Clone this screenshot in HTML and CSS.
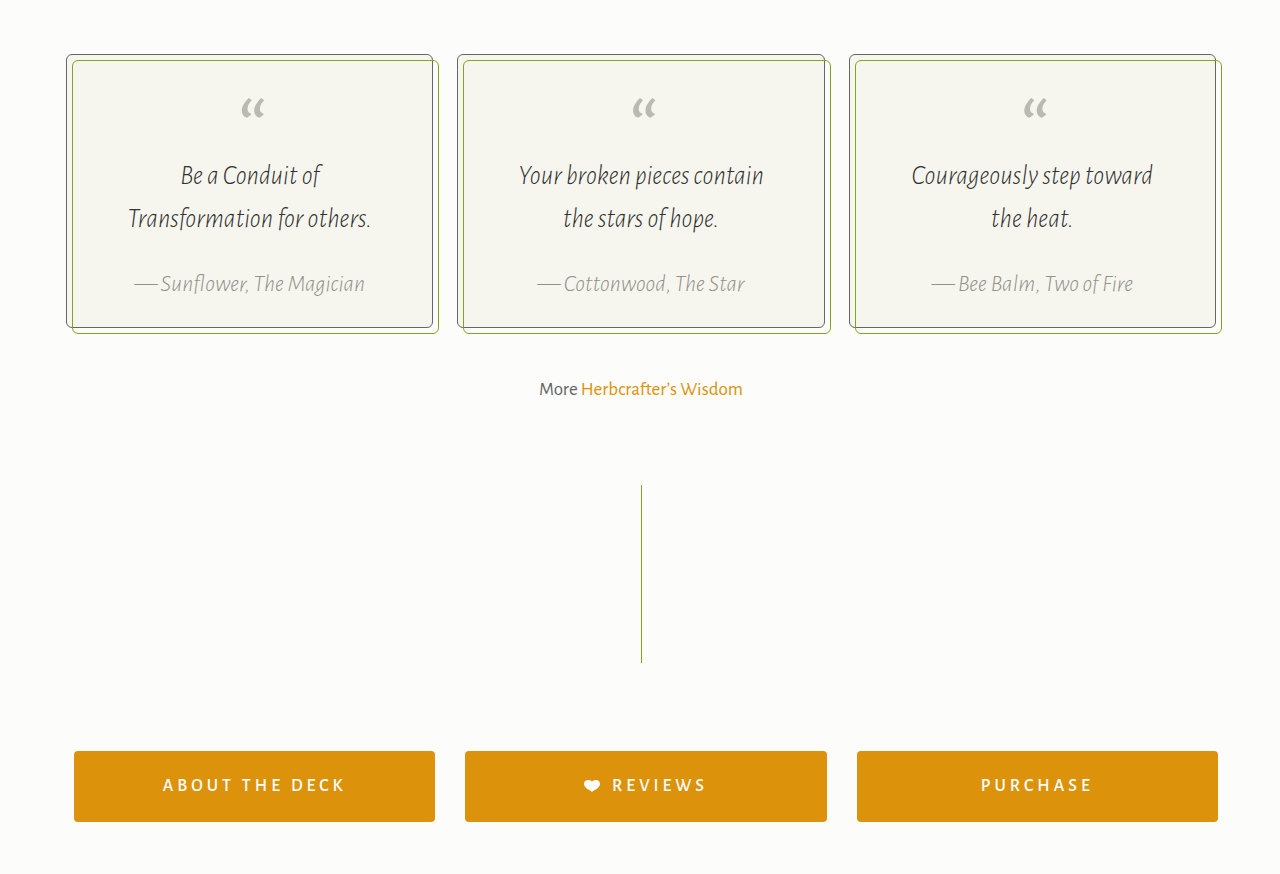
FILE: index.html
```
<!doctype html>
<html lang="en">
  <head>
    <title>Herbcrafter's Wisdom</title>
    <meta charset="utf-8" />
    <meta name="viewport" content="width=device-width, initial-scale=1" />
    <link rel="stylesheet" href="styles.css">
  </head>
  <body>
    <main class="page">
      <section class="quotes">
        <blockquote class="card">
          <span class="mark">“</span>
          <p class="quote">Be a Conduit of<br>Transformation for others.</p>
          <cite class="source">— Sunflower, The Magician</cite>
        </blockquote>
        <blockquote class="card">
          <span class="mark">“</span>
          <p class="quote">Your broken pieces contain<br>the stars of hope.</p>
          <cite class="source">— Cottonwood, The Star</cite>
        </blockquote>
        <blockquote class="card">
          <span class="mark">“</span>
          <p class="quote">Courageously step toward<br>the heat.</p>
          <cite class="source">— Bee Balm, Two of Fire</cite>
        </blockquote>
      </section>

      <p class="more">More <a href="#">Herbcrafter’s Wisdom</a></p>

      <hr class="divider">

      <nav class="buttons">
        <a class="button" href="#">About the Deck</a>
        <a class="button" href="#">
          <svg class="heart" viewBox="0 0 16 12" aria-hidden="true">
            <path d="M8 12C6.500 10 0 8.500 0 4C0 1.500 1.800 0 4.200 0C6 0 7.400 .7 8 1.800C8.600 .7 10 0 11.800 0C14.200 0 16 1.500 16 4C16 8.500 9.500 10 8 12Z" fill="currentColor"/>
          </svg>
          Reviews
        </a>
        <a class="button" href="#">Purchase</a>
      </nav>
    </main>
  </body>
</html>
```

FILE: styles.css
```
* {
  box-sizing: border-box;
}

body {
  margin: 0;
  background-color: #fcfcfa;
  color: #666666;
  font-family: "Alegreya Sans", Lato, sans-serif;
  font-size: 19px;
}

.page {
  padding: 54px 64px 52px 66px;
}

.quotes {
  display: grid;
  grid-template-columns: repeat(3, 1fr);
  gap: 24px;
}

.card {
  position: relative;
  display: flex;
  flex-direction: column;
  align-items: center;
  margin: 0;
  padding: 32px 24px 24px;
  border: 1px solid #666666;
  border-radius: 6px;
  background-color: #f6f6ee;
  text-align: center;
  font-style: italic;
}

/* second outline, shifted down and to the right */
.card::after {
  content: "";
  position: absolute;
  top: 5px;
  left: 5px;
  width: 100%;
  height: 100%;
  box-sizing: content-box;
  border: 1px solid #7fa622;
  border-radius: 6px;
}

.mark {
  height: 67px;
  color: #babab4;
  font-size: 96px;
  line-height: 88px;
}

.quote {
  margin: 0;
  color: #333333;
  font-size: 27px;
  font-weight: 300;
  line-height: 43px;
}

.source {
  margin-top: 26px;
  color: #92928c;
  font-size: 24px;
  font-weight: 300;
  line-height: 37px;
}

.more {
  margin: 47px 0 0;
  text-align: center;
  line-height: 30px;
}

.more a {
  color: #dc920b;
  text-decoration: none;
}

.divider {
  width: 1px;
  height: 178px;
  margin: 80px auto 88px;
  border: 0;
  background-color: #7fa622;
}

.buttons {
  display: grid;
  grid-template-columns: repeat(3, 1fr);
  gap: 30px;
  margin: 0 -2px 0 8px;
}

.button {
  display: flex;
  align-items: center;
  justify-content: center;
  gap: 12px;
  height: 71px;
  padding-bottom: 2px;
  border-radius: 4px;
  background-color: #dc920b;
  color: #ffffff;
  font-size: 18px;
  font-weight: 500;
  letter-spacing: 4px;
  text-decoration: none;
  text-transform: uppercase;
}

.heart {
  width: 16px;
  height: 12px;
}
```
